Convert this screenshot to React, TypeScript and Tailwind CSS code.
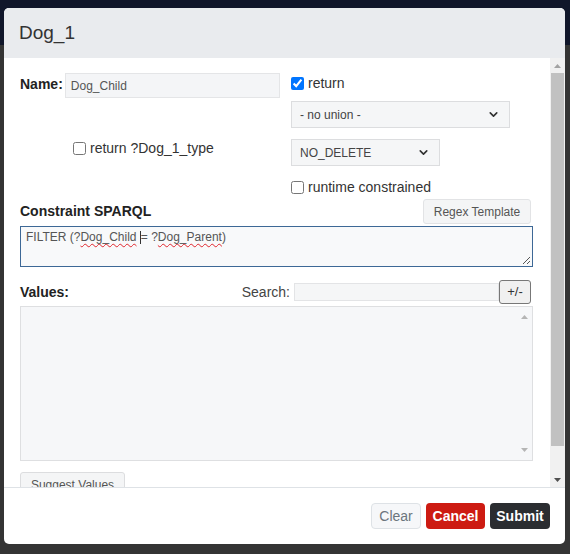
import { ChevronDown } from "lucide-react";

const font = { fontFamily: '"Liberation Sans", Arial, sans-serif' };

const Check = ({ checked, label }: { checked?: boolean; label: string }) => (
  <label className="flex items-center gap-[3px] text-[14px] text-[#333] leading-none">
    <input type="checkbox" defaultChecked={checked} className="m-0 mr-[1px] w-[13px] h-[13px] accent-[#0075ff]" />
    <span>{label}</span>
  </label>
);

const Select = ({ value, width }: { value: string; width: string }) => (
  <div
    className={`${width} h-[27px] flex items-center justify-between pl-[8px] pr-[9px] bg-[#f5f6f7] border border-[#dcdddf] text-[12px] text-[#444]`}
  >
    <span>{value}</span>
    <ChevronDown size={13} strokeWidth={3} className="text-[#333]" />
  </div>
);

const Arrow = ({ up, color }: { up?: boolean; color: string }) => (
  <svg width="7" height="4" viewBox="0 0 7 4">
    <path d={up ? "M0 4 L3.5 0 L7 4 Z" : "M0 0 L3.5 4 L7 0 Z"} fill={color} />
  </svg>
);

export default function App() {
  return (
    <div className="relative w-[570px] h-[554px] overflow-hidden bg-[#343434]" style={font}>
      <div className="h-[45px] bg-[#10162a]" />

      {/* modal */}
      <div className="absolute left-[4px] top-[8px] w-[561px] h-[536px] bg-white rounded-[5px] overflow-hidden flex flex-col">
        <div className="h-[50px] bg-[#e9ebee] flex items-center px-[15px] text-[19px] text-[#333]">Dog_1</div>

        <div className="flex-1 flex min-h-0">
          <div className="flex-1 pl-[16px] pr-[17px] pt-[15px] overflow-hidden">
            <div className="flex gap-[10px]">
              <div className="w-[261px]">
                <div className="flex items-start gap-[2px]">
                  <span className="font-bold text-[14px] text-[#222] pt-[1px]">Name:</span>
                  <div className="w-[215px] h-[25px] bg-[#f4f5f7] border border-[#e4e5e7] flex items-center pl-[5px] text-[12px] text-[#555]">
                    Dog_Child
                  </div>
                </div>
                <div className="mt-[43px] pl-[53px]">
                  <Check label="return ?Dog_1_type" />
                </div>
              </div>
              <div className="flex flex-col">
                <div className="h-[20px] flex items-center">
                  <Check checked label="return" />
                </div>
                <div className="mt-[8px]">
                  <Select value="- no union -" width="w-[219px]" />
                </div>
                <div className="mt-[11px]">
                  <Select value="NO_DELETE" width="w-[149px]" />
                </div>
                <div className="mt-[13px] h-[16px] flex items-center">
                  <Check label="runtime constrained" />
                </div>
              </div>
            </div>

            <div className="mt-[4px] flex items-center justify-between">
              <span className="font-bold text-[14px] text-[#222]">Constraint SPARQL</span>
              <div className="w-[108px] h-[25px] mr-[2px] flex items-center justify-center bg-[#f4f5f6] border border-[#e2e3e5] rounded-[3px] text-[12px] text-[#555]">
                Regex Template
              </div>
            </div>

            <div className="relative mt-[2px] h-[41px] border border-[#3d6896] bg-[#f8f9fa] px-[5px] pt-[1px] text-[12px] text-[#555]">
              FILTER (?
              <span className="underline decoration-wavy decoration-[#e0262c] decoration-1 underline-offset-2">Dog_Child</span>{" "}
              <span className="inline-block w-[1px] h-[13px] bg-[#333] align-middle" />
              = ?
              <span className="underline decoration-wavy decoration-[#e0262c] decoration-1 underline-offset-2">Dog_Parent</span>)
              <svg className="absolute right-[1px] bottom-[1px]" width="9" height="9" viewBox="0 0 9 9">
                <path d="M8 1 L1 8 M8 5 L5 8" stroke="#555" strokeWidth="1" />
              </svg>
            </div>

            <div className="mt-[13px] flex items-center">
              <span className="font-bold text-[14px] text-[#222] flex-1">Values:</span>
              <span className="text-[14px] text-[#444] mr-[4px]">Search:</span>
              <div className="w-[205px] h-[18px] bg-[#f5f6f7] border border-[#e3e4e6]" />
              <div className="w-[32px] h-[24px] mr-[2px] flex items-center justify-center border border-[#777] rounded-[3px] bg-[#f0f0f0] text-[13px] text-[#333]">
                +/-
              </div>
            </div>

            <div className="mt-[2px] h-[155px] bg-[#f6f7f9] border border-[#dedfe1] flex justify-end">
              <div className="w-[16px] flex flex-col items-center justify-between py-[8px]">
                <Arrow up color="#b5b5b5" />
                <Arrow color="#b5b5b5" />
              </div>
            </div>

            <div className="mt-[11px] w-[105px] h-[25px] bg-[#f4f5f6] border border-[#dcdddf] rounded-[3px] flex items-center justify-center text-[12px] text-[#555]">
              Suggest Values
            </div>
          </div>

          {/* scrollbar */}
          <div className="w-[15px] bg-[#f1f1f1] flex flex-col">
            <div className="h-[15px] flex items-center justify-center">
              <Arrow up color="#a3a3a3" />
            </div>
            <div className="h-[373px] mx-[1px] bg-[#c1c1c1]" />
            <div className="flex-1" />
            <div className="h-[15px] flex items-center justify-center">
              <Arrow color="#505050" />
            </div>
          </div>
        </div>

        <div className="h-[57px] border-t border-[#dee2e6] flex items-center justify-end gap-[5px] pr-[15px]">
          <div className="w-[50px] h-[26px] flex items-center justify-center bg-[#f6f7f9] border border-[#dee2e6] rounded-[4px] text-[14px] text-[#6c757d]">
            Clear
          </div>
          <div className="w-[59px] h-[26px] flex items-center justify-center bg-[#cd1b12] rounded-[4px] text-[14px] font-bold text-white">
            Cancel
          </div>
          <div className="w-[60px] h-[26px] flex items-center justify-center bg-[#2b2d31] rounded-[4px] text-[14px] font-bold text-white">
            Submit
          </div>
        </div>
      </div>
    </div>
  );
}
